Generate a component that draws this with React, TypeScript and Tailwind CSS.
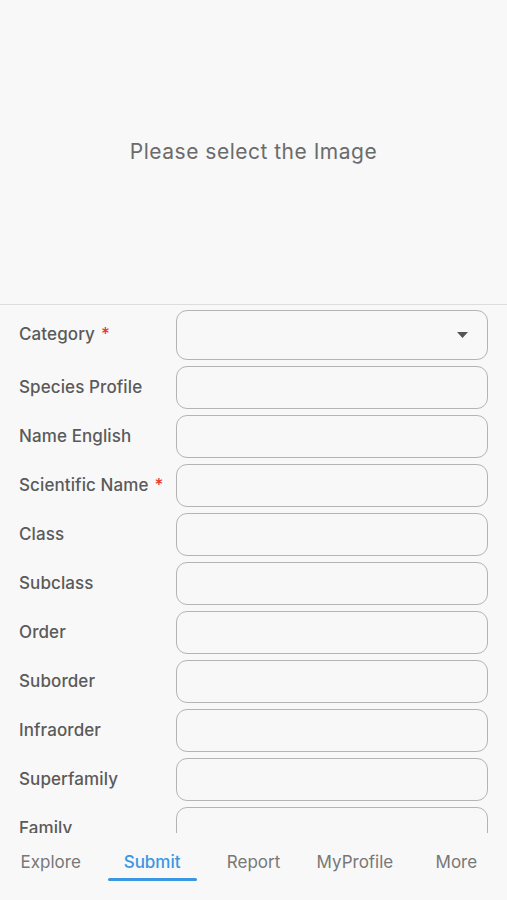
import React from 'react';

const fields: { label: string; required?: boolean; select?: boolean }[] = [
  { label: 'Category', required: true, select: true },
  { label: 'Species Profile' },
  { label: 'Name English' },
  { label: 'Scientific Name', required: true },
  { label: 'Class' },
  { label: 'Subclass' },
  { label: 'Order' },
  { label: 'Suborder' },
  { label: 'Infraorder' },
  { label: 'Superfamily' },
  { label: 'Family' },
  { label: 'Subfamily' },
  { label: 'Genus' },
];

const tabs = ['Explore', 'Submit', 'Report', 'MyProfile', 'More'];

const FieldRow: React.FC<{ label: string; required?: boolean; select?: boolean }> = ({
  label,
  required,
  select,
}) => {
  return (
    <div className="flex items-center pl-[19px] pr-[19px]">
      <div className="w-[157px] shrink-0 text-[17px] font-medium tracking-[0.1px] text-[#5a5a5a]">
        {label}
        {required && <span className="ml-[6px] text-[#e53935]">*</span>}
      </div>
      <div
        className={`flex flex-1 items-center justify-end rounded-[11px] border border-[#b4b4b4] pr-[19px] ${
          select ? 'h-[50px]' : 'h-[43px]'
        }`}
      >
        {select && (
          <svg width="11" height="6" viewBox="0 0 11 6">
            <path d="M0 0 L11 0 L5.5 6 Z" fill="#555" />
          </svg>
        )}
      </div>
    </div>
  );
};

export default function App() {
  return (
    <div
      className="flex h-[900px] w-full flex-col overflow-hidden bg-[#f8f8f8]"
      style={{ fontFamily: 'Inter, "Noto Sans", sans-serif' }}
    >
      <div className="flex h-[304px] shrink-0 items-center justify-center">
        <p className="text-[21px] tracking-[0.5px] text-[#6b6b6b]">Please select the Image</p>
      </div>
      <div className="h-px shrink-0 bg-[#dddddd]" />
      <div className="flex flex-1 flex-col gap-[6px] overflow-hidden pt-[5px]">
        {fields.map((f) => (
          <FieldRow key={f.label} {...f} />
        ))}
      </div>
      <nav className="flex h-[67px] shrink-0 bg-[#f8f8f8]">
        {tabs.map((t) => {
          const active = t === 'Submit';
          return (
            <div key={t} className="flex flex-1 flex-col items-center pt-[19px]">
              <span
                className={`text-[17px] leading-[20px] ${
                  active ? 'font-medium text-[#3b97e3]' : 'text-[#777777]'
                }`}
              >
                {t}
              </span>
              <div
                className={`mt-[6px] h-[3px] w-[89px] rounded-full ${
                  active ? 'bg-[#3b97e3]' : 'bg-transparent'
                }`}
              />
            </div>
          );
        })}
      </nav>
    </div>
  );
}
